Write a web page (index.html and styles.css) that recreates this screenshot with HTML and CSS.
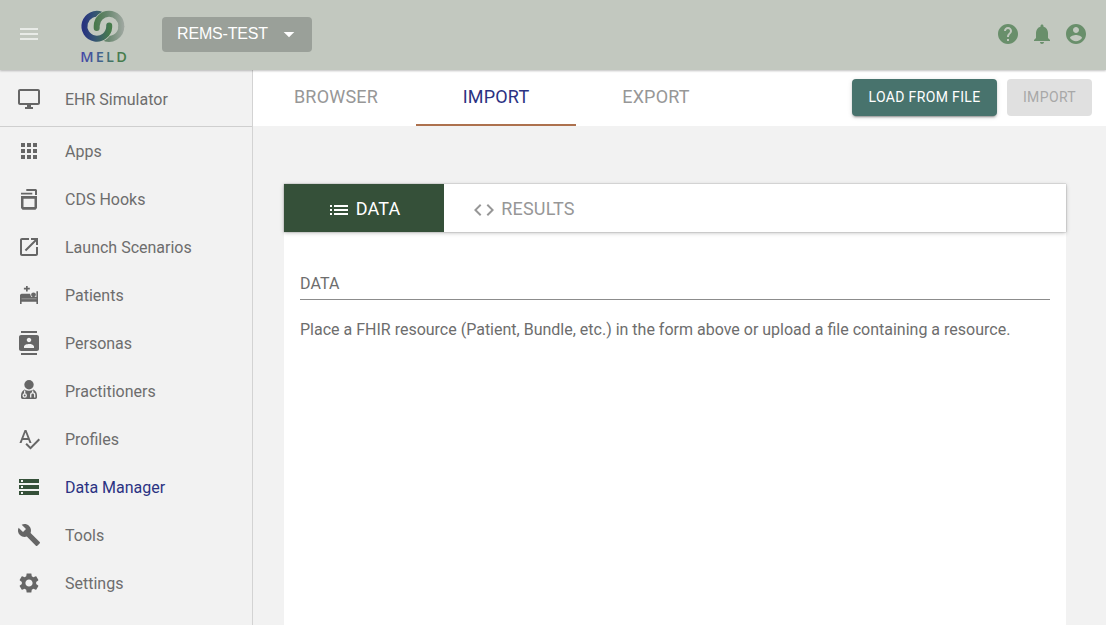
FILE: index.html
```html
<!DOCTYPE html>
<html lang="en">
<head>
<meta charset="utf-8">
<title>Meld - Data Manager</title>
<link rel="stylesheet" href="styles.css">
</head>
<body>
<header class="topbar">
  <svg class="icon menu" viewBox="0 0 24 24"><path d="M3 18h18v-2H3v2zm0-5h18v-2H3v2zm0-7v2h18V6H3z"/></svg>
  <svg class="logo" viewBox="76 6 54 60" width="54" height="60">
    <defs>
      <linearGradient id="left" gradientUnits="userSpaceOnUse" x1="84" y1="0" x2="110" y2="0"><stop offset="0" stop-color="#27347f"/><stop offset=".4" stop-color="#345374"/><stop offset="1" stop-color="#477c4b"/></linearGradient>
      <linearGradient id="right" gradientUnits="userSpaceOnUse" x1="94" y1="0" x2="124" y2="0"><stop offset="0" stop-color="#477849"/><stop offset=".4" stop-color="#63846a"/><stop offset="1" stop-color="#a0a8a1"/></linearGradient>
      <linearGradient id="word" gradientUnits="userSpaceOnUse" x1="81" y1="0" x2="126" y2="0"><stop offset="0" stop-color="#4446a8"/><stop offset=".5" stop-color="#41668a"/><stop offset=".75" stop-color="#437957"/><stop offset="1" stop-color="#477c47"/></linearGradient>
    </defs>
    <g fill="none" stroke-linecap="round">
      <path stroke="url(#right)" stroke-width="6" stroke-linecap="butt" d="M121.300 26.200A12.300 12.300 0 0 1 103 37.300"/>
      <path stroke="#c2c8bf" stroke-width="7.200" d="M109.200 25.500V27A12.300 12.300 0 0 1 97 38.700"/>
      <path stroke="url(#left)" stroke-width="6" d="M109.200 25.500V27A12.400 12.400 0 1 1 101.500 14.800"/>
      <path stroke="#c2c8bf" stroke-width="7.200" stroke-linecap="butt" d="M96.700 26A12.400 12.400 0 0 1 109 13.800"/>
      <path stroke="url(#right)" stroke-width="6" d="M96.700 28V26A12.300 12.300 0 0 1 121.300 26.200"/>
    </g>
    <text class="logo-text" x="80.300" y="62" textLength="46.500" fill="url(#word)">MELD</text>
  </svg>
  <button class="sandbox">REMS-TEST<svg class="icon" viewBox="0 0 24 24"><path d="M6.700 10l5.300 5.300 5.300-5.300z"/></svg></button>
  <div class="actions">
    <svg class="icon" viewBox="0 0 24 24"><path d="M12 2C6.480 2 2 6.480 2 12s4.480 10 10 10 10-4.480 10-10S17.520 2 12 2zm1 17h-2v-2h2v2zm2.070-7.750l-.9.920C13.450 12.900 13 13.500 13 15h-2v-.5c0-1.100.45-2.100 1.170-2.830l1.240-1.260c.37-.36.59-.86.59-1.410 0-1.100-.9-2-2-2s-2 .9-2 2H8c0-2.210 1.790-4 4-4s4 1.790 4 4c0 .88-.36 1.680-.93 2.250z"/></svg>
    <svg class="icon" viewBox="0 0 24 24"><path d="M12 22c1.100 0 2-.9 2-2h-4c0 1.100.89 2 2 2zm6-6v-5c0-3.070-1.640-5.640-4.500-6.320V4c0-.83-.67-1.500-1.500-1.500s-1.500.67-1.500 1.500v.68C7.630 5.360 6 7.920 6 11v5l-2 2v1h16v-1l-2-2z"/></svg>
    <svg class="icon" viewBox="0 0 24 24"><path d="M12 2C6.480 2 2 6.480 2 12s4.480 10 10 10 10-4.480 10-10S17.520 2 12 2zm0 3c1.660 0 3 1.340 3 3s-1.340 3-3 3-3-1.340-3-3 1.340-3 3-3zm0 14.200c-2.500 0-4.710-1.280-6-3.220.03-1.990 4-3.080 6-3.080 1.990 0 5.970 1.090 6 3.080-1.290 1.940-3.500 3.220-6 3.220z"/></svg>
  </div>
</header>
<div class="body">
  <nav class="sidebar">
    <a class="item simulator"><svg class="icon" viewBox="0 0 24 24"><path d="M21 2H3c-1.100 0-2 .9-2 2v12c0 1.100.9 2 2 2h7v2H8v2h8v-2h-2v-2h7c1.100 0 2-.9 2-2V4c0-1.100-.9-2-2-2zm0 14H3V4h18v12z"/></svg><span>EHR Simulator</span></a>
    <a class="item"><svg class="icon" viewBox="0 0 24 24"><path d="M4 8h4V4H4v4zm6 12h4v-4h-4v4zm-6 0h4v-4H4v4zm0-6h4v-4H4v4zm6 0h4v-4h-4v4zm6-10v4h4V4h-4zm-6 4h4V4h-4v4zm6 6h4v-4h-4v4zm0 6h4v-4h-4v4z"/></svg><span>Apps</span></a>
    <a class="item"><svg class="icon" viewBox="0 0 24 24"><path d="M9.300 2H19l1 1v5h-2V4H9.300zM4 5.700h11.300v1.800H4zM4 9h16v12l-1.500 1.700h-13L4 21zm2.500 2.700v8.300h11v-8.300z" fill-rule="evenodd"/></svg><span>CDS Hooks</span></a>
    <a class="item"><svg class="icon" viewBox="0 0 24 24"><path d="M19 19H5V5h7V3H5c-1.110 0-2 .9-2 2v14c0 1.100.89 2 2 2h14c1.100 0 2-.9 2-2v-7h-2v7zM14 3v2h3.590l-9.830 9.830 1.410 1.410L19 6.410V10h2V3h-7z"/></svg><span>Launch Scenarios</span></a>
    <a class="item"><svg class="icon" viewBox="0 0 24 24"><path d="M9 3h1.700v1.800h2.100v1.700h-2.100v1.900H9V6.500H6.900V4.800H9zM3 11.800L4.500 10.700h8.500l1.200 3.300h5.200V8.200H21V21h-1.600v-2.300H4.600V21H3z"/><path d="M4.500 15.500h15v.7h-15z" fill="#aaa"/><circle cx="16.500" cy="11.800" r="2.400"/></svg><span>Patients</span></a>
    <a class="item"><svg class="icon" viewBox="0 0 24 24"><path d="M20 0H4v2h16V0zM4 24h16v-2H4v2zM20 4H4c-1.100 0-2 .9-2 2v12c0 1.100.9 2 2 2h16c1.100 0 2-.9 2-2V6c0-1.100-.9-2-2-2zm-8 2.750c1.240 0 2.250 1.010 2.250 2.250s-1.010 2.250-2.250 2.250S9.750 10.240 9.750 9 10.760 6.750 12 6.750zM17 17H7v-1.500c0-1.670 3.330-2.500 5-2.500s5 .83 5 2.500V17z"/></svg><span>Personas</span></a>
    <a class="item"><svg class="icon" viewBox="0 0 24 24"><circle cx="12" cy="5.800" r="4.700"/><path d="M7.500 10.400Q12 13 16.500 10.400Q20 12.500 20 16.500V18.500Q20 19.900 18.500 19.900H5.500Q4 19.900 4 18.500V16.500Q4 12.500 7.500 10.400z"/><path class="cutout" d="M7.700 11.500v3.200M15.700 11.500v2.500M13.700 18.500v-2.600a2 2 0 0 1 4 0v2.600"/><circle class="cutout" cx="7.700" cy="16.500" r="1.600"/></svg><span>Practitioners</span></a>
    <a class="item"><svg class="icon" viewBox="0 0 24 24"><path d="M12.450 16h2.090L9.430 3H7.570L2.460 16h2.090l1.120-3h5.640l1.140 3zm-6.020-5L8.500 5.480 10.570 11H6.430zm15.160.59l-8.090 8.090L9.830 16l-1.410 1.410 5.090 5.090L23 13l-1.410-1.410z"/></svg><span>Profiles</span></a>
    <a class="item selected"><svg class="icon" viewBox="0 0 24 24"><path d="M2 20h20v-4H2v4zm2-3h2v2H4v-2zM2 4v4h20V4H2zm4 3H4V5h2v2zm-4 7h20v-4H2v4zm2-3h2v2H4v-2z"/></svg><span>Data Manager</span></a>
    <a class="item"><svg class="icon" viewBox="0 0 24 24"><path d="M22.700 19l-9.100-9.100c.9-2.300.4-5-1.500-6.900-2-2-5-2.400-7.400-1.300L9 6 6 9 1.600 4.700C.4 7.100.9 10.100 2.900 12.100c1.900 1.900 4.600 2.400 6.900 1.500l9.100 9.100c.4.4 1 .4 1.400 0l2.300-2.300c.5-.4.5-1.100.1-1.400z"/></svg><span>Tools</span></a>
    <a class="item"><svg class="icon" viewBox="0 0 24 24"><path d="M19.140 12.940c.04-.3.06-.61.06-.94 0-.32-.02-.64-.07-.94l2.030-1.580c.18-.14.23-.41.12-.61l-1.920-3.320c-.12-.22-.37-.29-.59-.22l-2.390.96c-.5-.38-1.030-.7-1.620-.94l-.36-2.540c-.04-.24-.24-.41-.48-.41h-3.840c-.24 0-.43.17-.47.41l-.36 2.540c-.59.24-1.130.57-1.620.94l-2.390-.96c-.22-.08-.47 0-.59.22L2.740 8.870c-.12.21-.08.47.12.61l2.030 1.580c-.05.3-.09.63-.09.94s.02.64.07.94l-2.030 1.580c-.18.14-.23.41-.12.61l1.920 3.320c.12.22.37.29.59.22l2.390-.96c.5.38 1.030.7 1.620.94l.36 2.540c.05.24.24.41.48.41h3.840c.24 0 .44-.17.47-.41l.36-2.540c.59-.24 1.130-.56 1.620-.94l2.390.96c.22.08.47 0 .59-.22l1.920-3.320c.12-.22.07-.47-.12-.61l-2.010-1.580zM12 15.600c-1.980 0-3.600-1.620-3.600-3.600s1.620-3.600 3.600-3.600 3.600 1.620 3.600 3.600-1.620 3.600-3.600 3.600z"/></svg><span>Settings</span></a>
  </nav>
  <main class="main">
    <div class="toolbar">
      <a class="tab">BROWSER</a>
      <a class="tab active">IMPORT</a>
      <a class="tab">EXPORT</a>
      <div class="buttons">
        <button class="btn load">LOAD FROM FILE</button>
        <button class="btn import" disabled>IMPORT</button>
      </div>
    </div>
    <section class="panel">
      <div class="subtabs">
        <a class="subtab current"><svg class="icon" viewBox="0 0 24 24"><path d="M3 13h2v-2H3v2zm0 4h2v-2H3v2zm0-8h2V7H3v2zm4 4h14v-2H7v2zm0 4h14v-2H7v2zM7 7v2h14V7H7z"/></svg><span>DATA</span></a>
        <a class="subtab"><svg class="icon" viewBox="0 0 24 24"><path d="M9.400 16.600L4.800 12l4.600-4.600L8 6l-6 6 6 6 1.400-1.400zm5.200 0l4.600-4.600-4.600-4.600L16 6l6 6-6 6-1.400-1.400z"/></svg><span>RESULTS</span></a>
      </div>
      <div class="content">
        <div class="field">DATA</div>
        <p class="hint">Place a FHIR resource (Patient, Bundle, etc.) in the form above or upload a file containing a resource.</p>
      </div>
    </section>
  </main>
</div>
</body>
</html>
```
FILE: styles.css
```css
* { box-sizing: border-box; }
body {
  margin: 0;
  height: 625px;
  overflow: hidden;
  display: flex;
  flex-direction: column;
  background: #f2f2f2;
  font-family: Roboto, sans-serif;
  font-size: 16px;
  color: #6d6d6d;
}
button { font: inherit; border: 0; }
.icon { width: 24px; height: 24px; flex: none; fill: currentColor; }
.topbar {
  position: relative;
  z-index: 2;
  flex: none;
  height: 70px;
  display: flex;
  align-items: flex-start;
  background: #c2c8bf;
  box-shadow: 0 1px 2px rgba(0, 0, 0, .25);
}
.menu { margin: 22px 0 0 17px; color: #e8ebe7; }
.logo { margin: 6px 0 0 35px; flex: none; }
.logo-text { font: 600 14.5px "Open Sans", sans-serif; }
.sandbox {
  width: 150px;
  height: 35px;
  margin: 17px 0 0 32px;
  padding: 0 11px 1px 15px;
  display: flex;
  align-items: center;
  justify-content: space-between;
  border-radius: 4px;
  background: #9aa099;
  color: #fff;
  font: 16px "Liberation Sans", sans-serif;
  letter-spacing: -.17px;
}
.actions { display: flex; gap: 10px; margin: 22px 18px 0 auto; color: #698f6b; }
.body { flex: 1; display: flex; min-height: 0; }
.sidebar { width: 253px; flex: none; border-right: 1px solid #d3d3d3; }
.item {
  height: 48px;
  padding-left: 17px;
  display: flex;
  align-items: center;
  gap: 24px;
}
.item .icon { color: #666; }
.simulator { height: 57px; padding-top: 2px; border-bottom: 1px solid #cfcfcf; }
.selected { color: #2b3282; }
.selected .icon { color: #355039; }
.item .cutout { fill: none; stroke: #f2f2f2; stroke-width: 1.3; }
.main { flex: 1; min-width: 0; display: flex; flex-direction: column; }
.toolbar { height: 56px; flex: none; display: flex; padding: 0 14px 0 3px; background: #fff; }
.tab {
  width: 160px;
  padding-bottom: 3px;
  display: flex;
  align-items: center;
  justify-content: center;
  font-size: 18px;
  letter-spacing: .2px;
  color: #979797;
}
.active { color: #2b3282; border-bottom: 2px solid #ad714e; padding-bottom: 1px; }
.buttons { display: flex; gap: 10px; margin: 9px 0 0 auto; }
.btn {
  height: 37px;
  padding: 0 0 1px;
  border-radius: 4px;
  font-size: 14px;
  letter-spacing: .36px;
}
.load {
  width: 145px;
  background: #48736d;
  color: #fff;
  box-shadow: 0 3px 1px -2px rgba(0, 0, 0, .2), 0 2px 2px rgba(0, 0, 0, .14), 0 1px 5px rgba(0, 0, 0, .12);
}
.import { width: 85px; background: #e0e0e0; color: #a8a8a8; }
.panel { width: 782px; flex: 1; margin: 58px 0 0 31px; background: #fff; }
.subtabs {
  height: 48px;
  display: flex;
  box-shadow: 0 1px 4px rgba(0, 0, 0, .25), 0 0 1px rgba(0, 0, 0, .4);
}
.subtab {
  width: 160px;
  display: flex;
  align-items: center;
  justify-content: center;
  gap: 5px;
  padding: 4px 1px 0 0;
  font-size: 18px;
  letter-spacing: .15px;
  color: #979797;
}
.subtab span { padding-bottom: 3px; }
.current { background: #355039; color: #fff; }
.content { padding: 43px 16px 0; }
.field { height: 25px; line-height: 18px; letter-spacing: .1px; border-bottom: 1px solid #8c8c8c; }
.hint { margin: 20px 0 0; line-height: 20px; white-space: nowrap; }
```
